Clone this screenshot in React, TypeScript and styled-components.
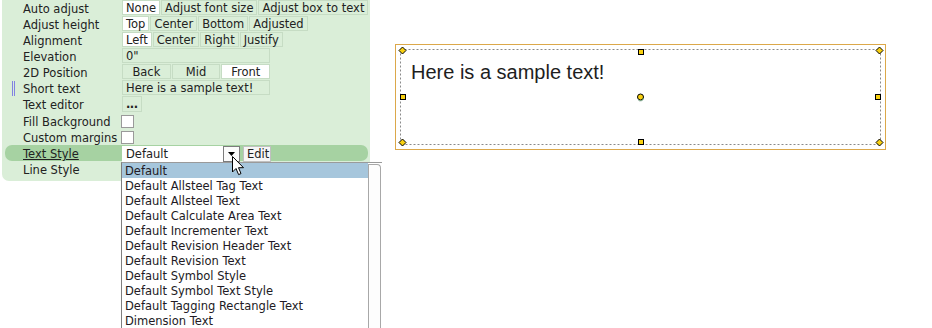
import styled, { createGlobalStyle } from 'styled-components';

const GlobalStyle = createGlobalStyle`
  html, body {
    margin: 0;
    padding: 0;
    height: 100%;
    overflow: hidden;
    background: #fff;
  }
`;

const styleNames = [
  'Default',
  'Default Allsteel Tag Text',
  'Default Allsteel Text',
  'Default Calculate Area Text',
  'Default Incrementer Text',
  'Default Revision Header Text',
  'Default Revision Text',
  'Default Symbol Style',
  'Default Symbol Text Style',
  'Default Tagging Rectangle Text',
  'Dimension Text',
];

const Diamond = ({ x, y }: { x: number; y: number }) => (
  <polygon
    points={`${x},${y - 3.5} ${x + 3.5},${y} ${x},${y + 3.5} ${x - 3.5},${y}`}
    fill='#f8d010'
    stroke='#000'
    strokeWidth='1'
  />
);

const Square = ({ x, y }: { x: number; y: number }) => (
  <rect x={x} y={y} width='5' height='5' fill='#f8d010' stroke='#000' strokeWidth='1' />
);

const App = () => {
  return (
    <>
      <GlobalStyle />
      <Page>
        <Panel>
          <Row>
            <Label>Auto adjust</Label>
            <Values>
              <Choice $selected>None</Choice>
              <Choice>Adjust font size</Choice>
              <Choice>Adjust box to text</Choice>
            </Values>
          </Row>
          <Row>
            <Label>Adjust height</Label>
            <Values>
              <Choice $selected>Top</Choice>
              <Choice>Center</Choice>
              <Choice>Bottom</Choice>
              <Choice>Adjusted</Choice>
            </Values>
          </Row>
          <Row>
            <Label>Alignment</Label>
            <Values>
              <Choice $selected>Left</Choice>
              <Choice>Center</Choice>
              <Choice>Right</Choice>
              <Choice>Justify</Choice>
            </Values>
          </Row>
          <Row>
            <Label>Elevation</Label>
            <Values>
              <Field>0"</Field>
            </Values>
          </Row>
          <Row>
            <Label>2D Position</Label>
            <Values>
              <Segments>
                <Segment>Back</Segment>
                <Segment>Mid</Segment>
                <Segment $selected>Front</Segment>
              </Segments>
            </Values>
          </Row>
          <Row>
            <Marker />
            <Label>Short text</Label>
            <Values>
              <Field>Here is a sample text!</Field>
            </Values>
          </Row>
          <Row $height={17}>
            <Label>Text editor</Label>
            <Values>
              <DotsButton>...</DotsButton>
            </Values>
          </Row>
          <Row>
            <Label>Fill Background</Label>
            <Values>
              <Check />
            </Values>
          </Row>
          <Row>
            <Label>Custom margins</Label>
            <Values>
              <Check />
            </Values>
          </Row>
          <Row $active>
            <Label $underline>Text Style</Label>
            <Values>
              <SelectWrap>
                <SelectBox>
                  <SelectText>Default</SelectText>
                  <ArrowButton>
                    <svg width='7' height='4' viewBox='0 0 7 4'>
                      <polygon points='0,0 7,0 3.5,4' fill='#000' />
                    </svg>
                  </ArrowButton>
                </SelectBox>
                <EditButton>Edit</EditButton>
                <DropList>
                  <Options>
                    {styleNames.map((name, i) => (
                      <Option key={name} $active={i === 0}>
                        {name}
                      </Option>
                    ))}
                  </Options>
                  <ScrollTrack>
                    <ScrollThumb />
                  </ScrollTrack>
                </DropList>
                <Cursor width='13' height='20' viewBox='0 0 13 20'>
                  <path
                    d='M0.5 0.5 L0.5 16 L4 12.5 L6.6 18.6 L9 17.6 L6.5 11.7 L11.5 11.7 Z'
                    fill='#fff'
                    stroke='#000'
                    strokeWidth='1'
                    strokeLinejoin='miter'
                  />
                </Cursor>
              </SelectWrap>
            </Values>
          </Row>
          <Row $height={17}>
            <Label>Line Style</Label>
          </Row>
        </Panel>
        <Canvas>
          <TextBox>
            <SampleText>Here is a sample text!</SampleText>
            <Adorners width='491' height='106' viewBox='0 0 491 106'>
              <rect
                x='5.5'
                y='5.5'
                width='480'
                height='95'
                fill='none'
                stroke='#8a8a8a'
                strokeWidth='1'
                strokeDasharray='2 2'
              />
              <Diamond x={7.5} y={6.5} />
              <Diamond x={484.5} y={6.5} />
              <Diamond x={7.5} y={98.5} />
              <Diamond x={484.5} y={98.5} />
              <Square x={243.5} y={5.5} />
              <Square x={243.5} y={95.5} />
              <Square x={5.5} y={50.5} />
              <Square x={480.5} y={50.5} />
              <circle cx='245.5' cy='53' r='3' fill='#f8d010' stroke='#000' strokeWidth='1' />
              <path d='M243 55.5 A3 3 0 0 0 248.5 54' fill='none' stroke='#6a9a7a' strokeWidth='1' />
            </Adorners>
          </TextBox>
        </Canvas>
      </Page>
    </>
  );
};

const Page = styled.div`
  display: flex;
  align-items: flex-start;
  height: 328px;
  font-family: 'DejaVu Sans', Verdana, sans-serif;
  font-size: 11.5px;
  color: #222;
`;

const Panel = styled.div`
  width: 368px;
  margin-left: 2px;
  padding-bottom: 3px;
  background: #daeed8;
  border-radius: 0 0 7px 7px;
`;

const Row = styled.div<{ $height?: number; $active?: boolean }>`
  position: relative;
  display: grid;
  grid-template-columns: 117px 1fr;
  height: ${(p) => p.$height ?? 16}px;
  margin: 0 2px 0 3px;
  border-radius: 7px;
  background: ${(p) => (p.$active ? '#a6d2a2' : 'transparent')};
`;

const Marker = styled.span`
  position: absolute;
  left: 7px;
  top: 1px;
  width: 1px;
  height: 15px;
  border-left: 1px solid #8282e2;
  border-right: 1px solid #8282e2;
`;

const Label = styled.div<{ $underline?: boolean }>`
  padding: 1px 0 0 18px;
  line-height: 17px;
  white-space: nowrap;
  text-decoration: ${(p) => (p.$underline ? 'underline' : 'none')};
`;

const Values = styled.div`
  display: flex;
  align-items: flex-start;
  gap: 1px;
`;

const Choice = styled.div<{ $selected?: boolean }>`
  box-sizing: border-box;
  height: 15px;
  padding: 0 3px;
  line-height: 15px;
  border: 1px solid #c6dcc4;
  background: ${(p) => (p.$selected ? '#fff' : 'transparent')};
  white-space: nowrap;
`;

const Field = styled(Choice)`
  width: 148px;
`;

const Segments = styled.div`
  display: flex;
  gap: 1px;
  width: 148px;
`;

const Segment = styled(Choice)`
  flex: 1;
  text-align: center;
`;

const DotsButton = styled(Choice)`
  height: 16px;
  line-height: 14px;
  font-weight: bold;
  letter-spacing: -0.5px;
`;

const Check = styled.div`
  box-sizing: border-box;
  width: 13px;
  height: 13px;
  margin: 2px 0 0 -1px;
  background: #fff;
  border: 1px solid #9a9a9a;
`;

const SelectWrap = styled.div`
  position: relative;
  display: flex;
  gap: 3px;
  margin-top: 1px;
`;

const SelectBox = styled.div`
  display: flex;
  width: 118px;
  height: 16px;
  background: #fff;
`;

const SelectText = styled.div`
  flex: 1;
  padding-left: 4px;
  line-height: 16px;
`;

const ArrowButton = styled.div`
  box-sizing: border-box;
  display: flex;
  align-items: center;
  justify-content: center;
  width: 17px;
  height: 16px;
  border: 1px solid #7c7c7c;
  background: #fbfbfb;
`;

const EditButton = styled.div`
  box-sizing: border-box;
  width: 28px;
  height: 16px;
  padding-left: 3px;
  line-height: 14px;
  background: #f6f6f6;
  border: 1px solid #c0c0c0;
`;

const DropList = styled.div`
  position: absolute;
  top: 16px;
  left: -1px;
  display: flex;
  width: 260px;
  height: 168px;
  background: #fff;
  border-left: 1px solid #7f7f7f;
  border-top: 1px solid #9a9a9a;
  overflow: hidden;
`;

const Options = styled.div`
  flex: 1;
`;

const Option = styled.div<{ $active?: boolean }>`
  box-sizing: border-box;
  height: 15px;
  padding: 1px 0 0 3px;
  line-height: 15px;
  white-space: nowrap;
  color: #221a24;
  background: ${(p) => (p.$active ? '#a6c6dc' : 'transparent')};
`;

const ScrollTrack = styled.div`
  display: flex;
  width: 13px;
  padding: 1px 1px 0 0;
`;

const ScrollThumb = styled.div`
  flex: 1;
  border: 1px solid #a8a8a8;
  border-bottom: none;
  border-radius: 0 4px 0 0;
  background: #fdfdfd;
`;

const Cursor = styled.svg`
  position: absolute;
  left: 110px;
  top: 10px;
`;

const Canvas = styled.div`
  flex: 1;
  padding: 44px 0 0 25px;
`;

const TextBox = styled.div`
  position: relative;
  box-sizing: border-box;
  width: 491px;
  height: 106px;
  padding: 16px 0 0 15px;
  border: 1px solid #dca84a;
`;

const SampleText = styled.div`
  font-family: 'Liberation Sans', Arial, sans-serif;
  font-size: 20px;
  line-height: 23px;
  color: #1e1e1e;
`;

const Adorners = styled.svg`
  position: absolute;
  left: -1px;
  top: -1px;
  pointer-events: none;
`;

export default App;
